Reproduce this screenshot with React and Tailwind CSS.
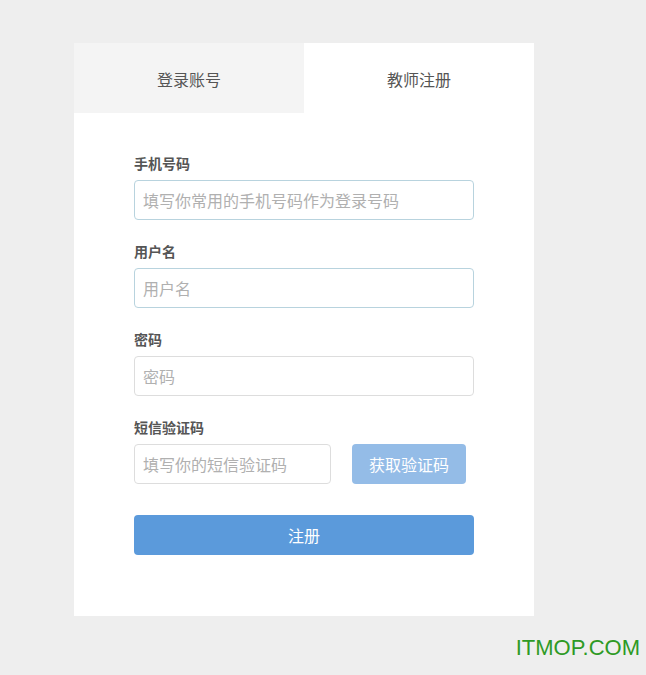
export default function App() {
  const font = { fontFamily: '"Microsoft YaHei", "Noto Sans CJK SC", "Noto Sans", sans-serif' };

  return (
    <div className="min-h-[675px] w-full bg-[#eeeeee] pt-[43px]" style={font}>
      <div className="ml-[74px] w-[460px] bg-white">
        {/* tabs */}
        <div className="flex h-[70px]">
          <div className="flex w-1/2 items-center justify-center bg-[#f4f4f4] pt-[1px] text-[16px] text-[#555]">
            登录账号
          </div>
          <div className="flex w-1/2 items-center justify-center bg-white pt-[1px] text-[16px] text-[#555]">
            教师注册
          </div>
        </div>

        {/* form */}
        <div className="px-[60px] pb-[61px] pt-[40px]">
          <Field label="手机号码" placeholder="填写你常用的手机号码作为登录号码" border="border-[#b8d3de]" />
          <Field label="用户名" placeholder="用户名" border="border-[#b8d3de]" />
          <Field label="密码" placeholder="密码" border="border-[#dddddd]" type="password" />

          <div className="mb-[21px]">
            <label className="mb-[7px] block h-[20px] text-[14px] font-bold leading-[20px] text-[#555]">
              短信验证码
            </label>
            <div className="flex items-center">
              <input
                placeholder="填写你的短信验证码"
                className="h-[40px] w-[197px] rounded-[4px] border border-[#dddddd] bg-white px-[8px] text-[16px] text-[#333] outline-none placeholder:text-[#b0b0b0]"
              />
              <button className="ml-[21px] h-[40px] w-[114px] rounded-[4px] bg-[#94bce7] text-[16px] text-white">
                获取验证码
              </button>
            </div>
          </div>

          <button className="mt-[10px] h-[40px] w-full rounded-[4px] bg-[#5b9adb] text-[16px] text-white">
            注册
          </button>
        </div>
      </div>

      <div className="flex justify-end pr-[6px] pt-[19px]">
        <span
          className="text-[22px] leading-[26px] text-[#2e9a25]"
          style={{ fontFamily: '"Liberation Sans", Arial, sans-serif' }}
        >
          ITMOP.COM
        </span>
      </div>
    </div>
  );
}

function Field({ label, placeholder, border, type = "text" }) {
  return (
    <div className="mb-[21px]">
      <label className="mb-[7px] block h-[20px] text-[14px] font-bold leading-[20px] text-[#555]">
        {label}
      </label>
      <input
        type={type}
        placeholder={placeholder}
        className={"h-[40px] w-full rounded-[4px] border bg-white px-[8px] text-[16px] text-[#333] outline-none placeholder:text-[#b0b0b0] " + border}
      />
    </div>
  );
}
